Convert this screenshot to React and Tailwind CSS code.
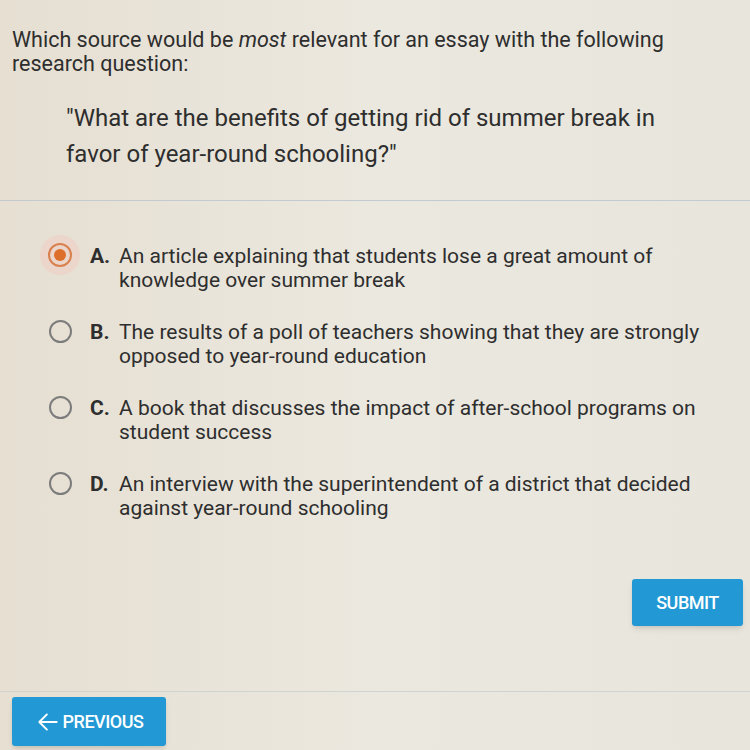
import React from 'react';

const options = [
  { letter: 'A.', lines: ['An article explaining that students lose a great amount of', 'knowledge over summer break'], selected: true },
  { letter: 'B.', lines: ['The results of a poll of teachers showing that they are strongly', 'opposed to year-round education'] },
  { letter: 'C.', lines: ['A book that discusses the impact of after-school programs on', 'student success'] },
  { letter: 'D.', lines: ['An interview with the superintendent of a district that decided', 'against year-round schooling'] },
];

function Radio({ selected }) {
  if (selected) {
    return (
      <div className="w-[40px] h-[40px] rounded-full bg-[#ecd5ca] flex items-center justify-center">
        <div className="w-[24px] h-[24px] rounded-full border-2 border-[#d8804e] flex items-center justify-center">
          <div className="w-[12px] h-[12px] rounded-full bg-[#dd6f2c]" />
        </div>
      </div>
    );
  }
  return (
    <div className="w-[40px] h-[40px] flex items-center justify-center">
      <div className="w-[23px] h-[23px] rounded-full border-2 border-[#7c7c7c]" />
    </div>
  );
}

export default function App() {
  return (
    <div
      className="w-[750px] h-[750px] overflow-hidden bg-gradient-to-r from-[#e6dfd2] via-[#ebe8df] to-[#e8e5dc] text-[#2e2e2e] flex flex-col"
      style={{ fontFamily: 'Roboto, "Liberation Sans", sans-serif' }}
    >
      <div className="shrink-0 px-[12px] pt-[28px] text-[21.5px] leading-[24px] whitespace-nowrap">
        <div>
          Which source would be <i>most</i> relevant for an essay with the following
        </div>
        <div>research question:</div>
      </div>
      <div className="shrink-0 pl-[66px] pt-[24px] text-[24px] leading-[36px] whitespace-nowrap">
        <div>"What are the benefits of getting rid of summer break in</div>
        <div>favor of year-round schooling?"</div>
      </div>
      <div className="shrink-0 mt-[28px] h-[1px] bg-[#c3cad0]" />
      <div className="shrink-0 pt-[43px] pl-[40px] flex flex-col gap-[28px]">
        {options.map((o) => (
          <div key={o.letter} className="flex items-start">
            <div className="-mt-[9px]">
              <Radio selected={o.selected} />
            </div>
            <div className="ml-[10px] w-[29px] text-[21px] leading-[24px] font-bold">{o.letter}</div>
            <div className="text-[21px] leading-[24px] whitespace-nowrap">
              {o.lines.map((l) => (
                <div key={l}>{l}</div>
              ))}
            </div>
          </div>
        ))}
      </div>
      <div className="shrink-0 flex justify-end pr-[7px] mt-[59px]">
        <div className="w-[111px] h-[47px] rounded-[3px] bg-[#2299d4] shadow-md text-white text-[18px] font-medium tracking-[-0.5px] flex items-center justify-center">
          SUBMIT
        </div>
      </div>
      <div className="shrink-0 mt-[65px] h-[1px] bg-[#d0d3d2]" />
      <div className="shrink-0 pl-[12px] pt-[5px]">
        <div className="w-[154px] h-[49px] rounded-[3px] bg-[#2299d4] shadow-md text-white text-[18px] font-medium tracking-[-0.5px] flex items-center justify-center gap-[2px]">
          <svg width="26" height="26" viewBox="0 0 24 24" fill="none" stroke="white" strokeWidth="1.8" strokeLinecap="round" strokeLinejoin="round">
            <path d="M20 12H5M11 5l-7 7 7 7" />
          </svg>
          PREVIOUS
        </div>
      </div>
    </div>
  );
}
